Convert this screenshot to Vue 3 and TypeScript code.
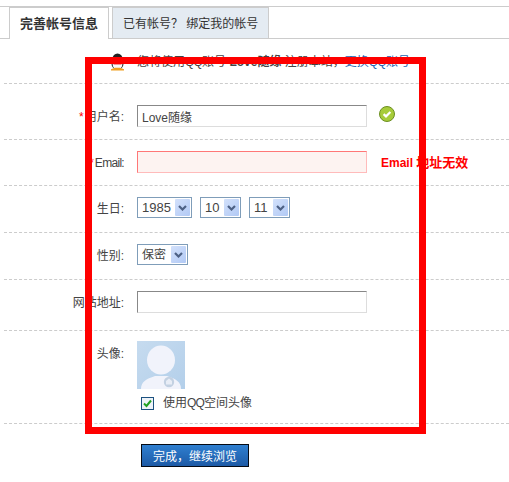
<script setup lang="ts">
interface DateSelect {
  value: string;
  width: number;
}

const dateSelects: DateSelect[] = [
  { value: '1985', width: 55 },
  { value: '10', width: 41 },
  { value: '11', width: 41 },
];
</script>

<template>
  <div class="page">
    <div class="tabs">
      <div class="tab tab--active">完善帐号信息</div>
      <div class="tab">已有帐号？ 绑定我的帐号</div>
    </div>

    <div class="notice row">
      <svg class="penguin" width="15" height="18" viewBox="0 0 15 18">
        <ellipse cx="7.5" cy="6" rx="5" ry="5.5" fill="#222" />
        <ellipse cx="7.5" cy="11" rx="6" ry="5.5" fill="#333" />
        <ellipse cx="7.5" cy="11.5" rx="4.8" ry="5" fill="#fafafa" />
        <path d="M3 9.5h9l-.6 2H3.6z" fill="#e33" />
        <path d="M1 16.2l4-1.4h5l4 1.4v1.3H1z" fill="#f0a020" />
      </svg>
      <span class="notice__text">您将使用<span class="qq">QQ</span>账号 <b>Love随缘</b> 注册本站，<a class="link">更换<span class="qq">QQ</span>账号</a></span>
    </div>

    <div class="row row--name">
      <label class="label"><i>*</i>用户名:</label>
      <input class="input" value="Love随缘" />
      <svg class="ok" width="16" height="16" viewBox="0 0 16 16">
        <circle cx="8" cy="8" r="7.5" fill="#a7cc3a" stroke="#6c8f22" />
        <path d="M4.6 8.1l2.4 2.3L11.4 6" fill="none" stroke="#fff" stroke-width="2.2" />
      </svg>
    </div>

    <div class="row row--email">
      <label class="label"><i>*</i><span class="label__latin">Email:</span></label>
      <input class="input input--error" />
      <span class="error">Email <span class="error__cjk">地址无效</span></span>
    </div>

    <div class="row row--date">
      <label class="label">生日:</label>
      <div class="selects">
        <div v-for="s in dateSelects" :key="s.value" class="select" :style="{ width: s.width + 'px' }">
          <span class="select__value select__value--num">{{ s.value }}</span>
          <span class="select__btn">
            <svg width="9" height="6" viewBox="0 0 9 6"><path d="M1 1l3.5 3.5L8 1" fill="none" stroke="#4d6185" stroke-width="2.2" /></svg>
          </span>
        </div>
      </div>
    </div>

    <div class="row row--gender">
      <label class="label">性别:</label>
      <div class="select select--gender">
        <span class="select__value">保密</span>
        <span class="select__btn">
          <svg width="9" height="6" viewBox="0 0 9 6"><path d="M1 1l3.5 3.5L8 1" fill="none" stroke="#4d6185" stroke-width="2.2" /></svg>
        </span>
      </div>
    </div>

    <div class="row row--site">
      <label class="label">网站地址:</label>
      <input class="input" />
    </div>

    <div class="row row--avatar">
      <label class="label">头像:</label>
      <div>
        <svg class="avatar" width="48" height="48" viewBox="0 0 48 48">
          <defs>
            <linearGradient id="avatarBg" x1="0" y1="0" x2="1" y2="1">
              <stop offset="0" stop-color="#c6dbef" />
              <stop offset="1" stop-color="#b3cfea" />
            </linearGradient>
          </defs>
          <rect width="48" height="48" fill="url(#avatarBg)" />
          <ellipse cx="24" cy="19" rx="14" ry="14.5" fill="#f1f3fb" />
          <path d="M4 48c0-7 5-10 14-13h12c9 3 14 6 14 13z" fill="#f1f3fb" />
          <circle cx="32" cy="41" r="5.2" fill="#c3d1e2" />
          <path d="M32 37.5l3 2.5v3.5h-6V40z" fill="#e8edf6" />
        </svg>
        <label class="use-qq">
          <span class="check">
            <svg width="9" height="9" viewBox="0 0 9 9"><path d="M1 4.5l2.5 2.5L8 1.5" fill="none" stroke="#21a121" stroke-width="2" /></svg>
          </span>
          <span>使用<span class="qq">QQ</span>空间头像</span>
        </label>
      </div>
    </div>

    <button class="submit">完成，继续浏览</button>

    <!-- red annotation frame over the form -->
    <div class="frame"></div>
  </div>
</template>

<style scoped>
.page {
  position: relative;
  width: 509px;
  height: 482px;
  padding-top: 6px;
  box-sizing: border-box;
  overflow: hidden;
  background: #fff;
  color: #444;
  font: 12px/16px "Liberation Sans", "Noto Sans CJK SC", sans-serif;
}

.tabs {
  display: flex;
  gap: 3px;
  height: 31px;
  padding-left: 9px;
  border-top: 1px solid #ccc;
  border-bottom: 1px solid #ccc;
}

.tab {
  height: 31px;
  padding: 0 10px;
  background: #e4ebf2;
  border: 1px solid #ccc;
  border-top-width: 1px;
  border-bottom: 0;
  box-sizing: border-box;
  line-height: 32px;
  font-size: 12px;
  color: #333;
}

.tab--active {
  height: 32px;
  background: #fff;
  font-size: 13px;
  font-weight: bold;
  color: #333;
}

.row {
  display: flex;
  align-items: flex-start;
  margin-left: 4px;
  border-bottom: 1px dashed #ccc;
  box-sizing: border-box;
}

.notice {
  height: 45px;
  padding: 14px 0 0 106px;
  gap: 12px;
}

.notice__text {
  padding-top: 1px;
}

.qq {
  letter-spacing: -0.8px;
}

.link {
  color: #2466b1;
}

.row--name { height: 56px; padding-top: 21px; }
.row--email { height: 46px; padding-top: 11px; }
.row--date { height: 47px; padding-top: 11px; }
.row--gender { height: 47px; padding-top: 11px; }
.row--site { height: 51px; padding-top: 11px; }
.row--avatar { height: 93px; padding-top: 10px; }

.label {
  width: 120px;
  margin-right: 13px;
  padding-top: 1px;
  text-align: right;
  line-height: 22px;
  white-space: nowrap;
}

.row--avatar .label {
  padding-top: 2px;
}

.label i {
  margin-right: 1px;
  color: #f00;
  font-style: normal;
}

.label__latin {
  letter-spacing: -0.7px;
}

.input {
  width: 230px;
  height: 22px;
  padding: 0 4px;
  box-sizing: border-box;
  border: 1px solid #ddd;
  border-top-color: #888;
  border-left-color: #888;
  outline: none;
  color: #444;
  font: 12px "Liberation Sans", "Noto Sans CJK SC", sans-serif;
}

.input--error {
  background: #fdf3f1;
  border-color: #fbb;
  border-top-color: #f77;
  border-left-color: #f77;
}

.ok {
  margin: 1px 0 0 12px;
}

.error {
  margin-left: 14px;
  padding-top: 1px;
  color: #f00;
  font-weight: bold;
  line-height: 22px;
}

.error__cjk {
  font-size: 13px;
}

.selects {
  display: flex;
  gap: 8px;
}

.select {
  display: flex;
  align-items: center;
  justify-content: space-between;
  height: 21px;
  padding: 1px;
  box-sizing: border-box;
  background: #fff;
  border: 1px solid #7f9db9;
}

.select--gender {
  width: 51px;
}

.select__value {
  padding-left: 3px;
  color: #444;
}

.select__value--num {
  font-size: 13px;
}

.select__btn {
  display: flex;
  align-items: center;
  justify-content: center;
  width: 15px;
  height: 17px;
  border-radius: 1px;
  background: linear-gradient(135deg, #d3e1fb, #b1c9f5);
}

.avatar {
  display: block;
}

.use-qq {
  display: flex;
  align-items: center;
  gap: 9px;
  margin: 7px 0 0 4px;
  line-height: 14px;
}

.check {
  display: flex;
  align-items: center;
  justify-content: center;
  width: 13px;
  height: 13px;
  box-sizing: border-box;
  border: 1px solid #1c5180;
  background: #eef3f8;
}

.submit {
  display: block;
  width: 108px;
  height: 23px;
  margin: 20px 0 0 141px;
  padding: 0;
  border: 1px solid #050a14;
  background: linear-gradient(#2f7fd0, #1d5aa6);
  color: #fff;
  font: 12px "Liberation Sans", "Noto Sans CJK SC", sans-serif;
}

.frame {
  position: absolute;
  left: 85px;
  top: 57px;
  width: 341px;
  height: 377px;
  box-sizing: border-box;
  border: 7px solid #f00;
  pointer-events: none;
}
</style>

<style>
body {
  margin: 0;
}
</style>
